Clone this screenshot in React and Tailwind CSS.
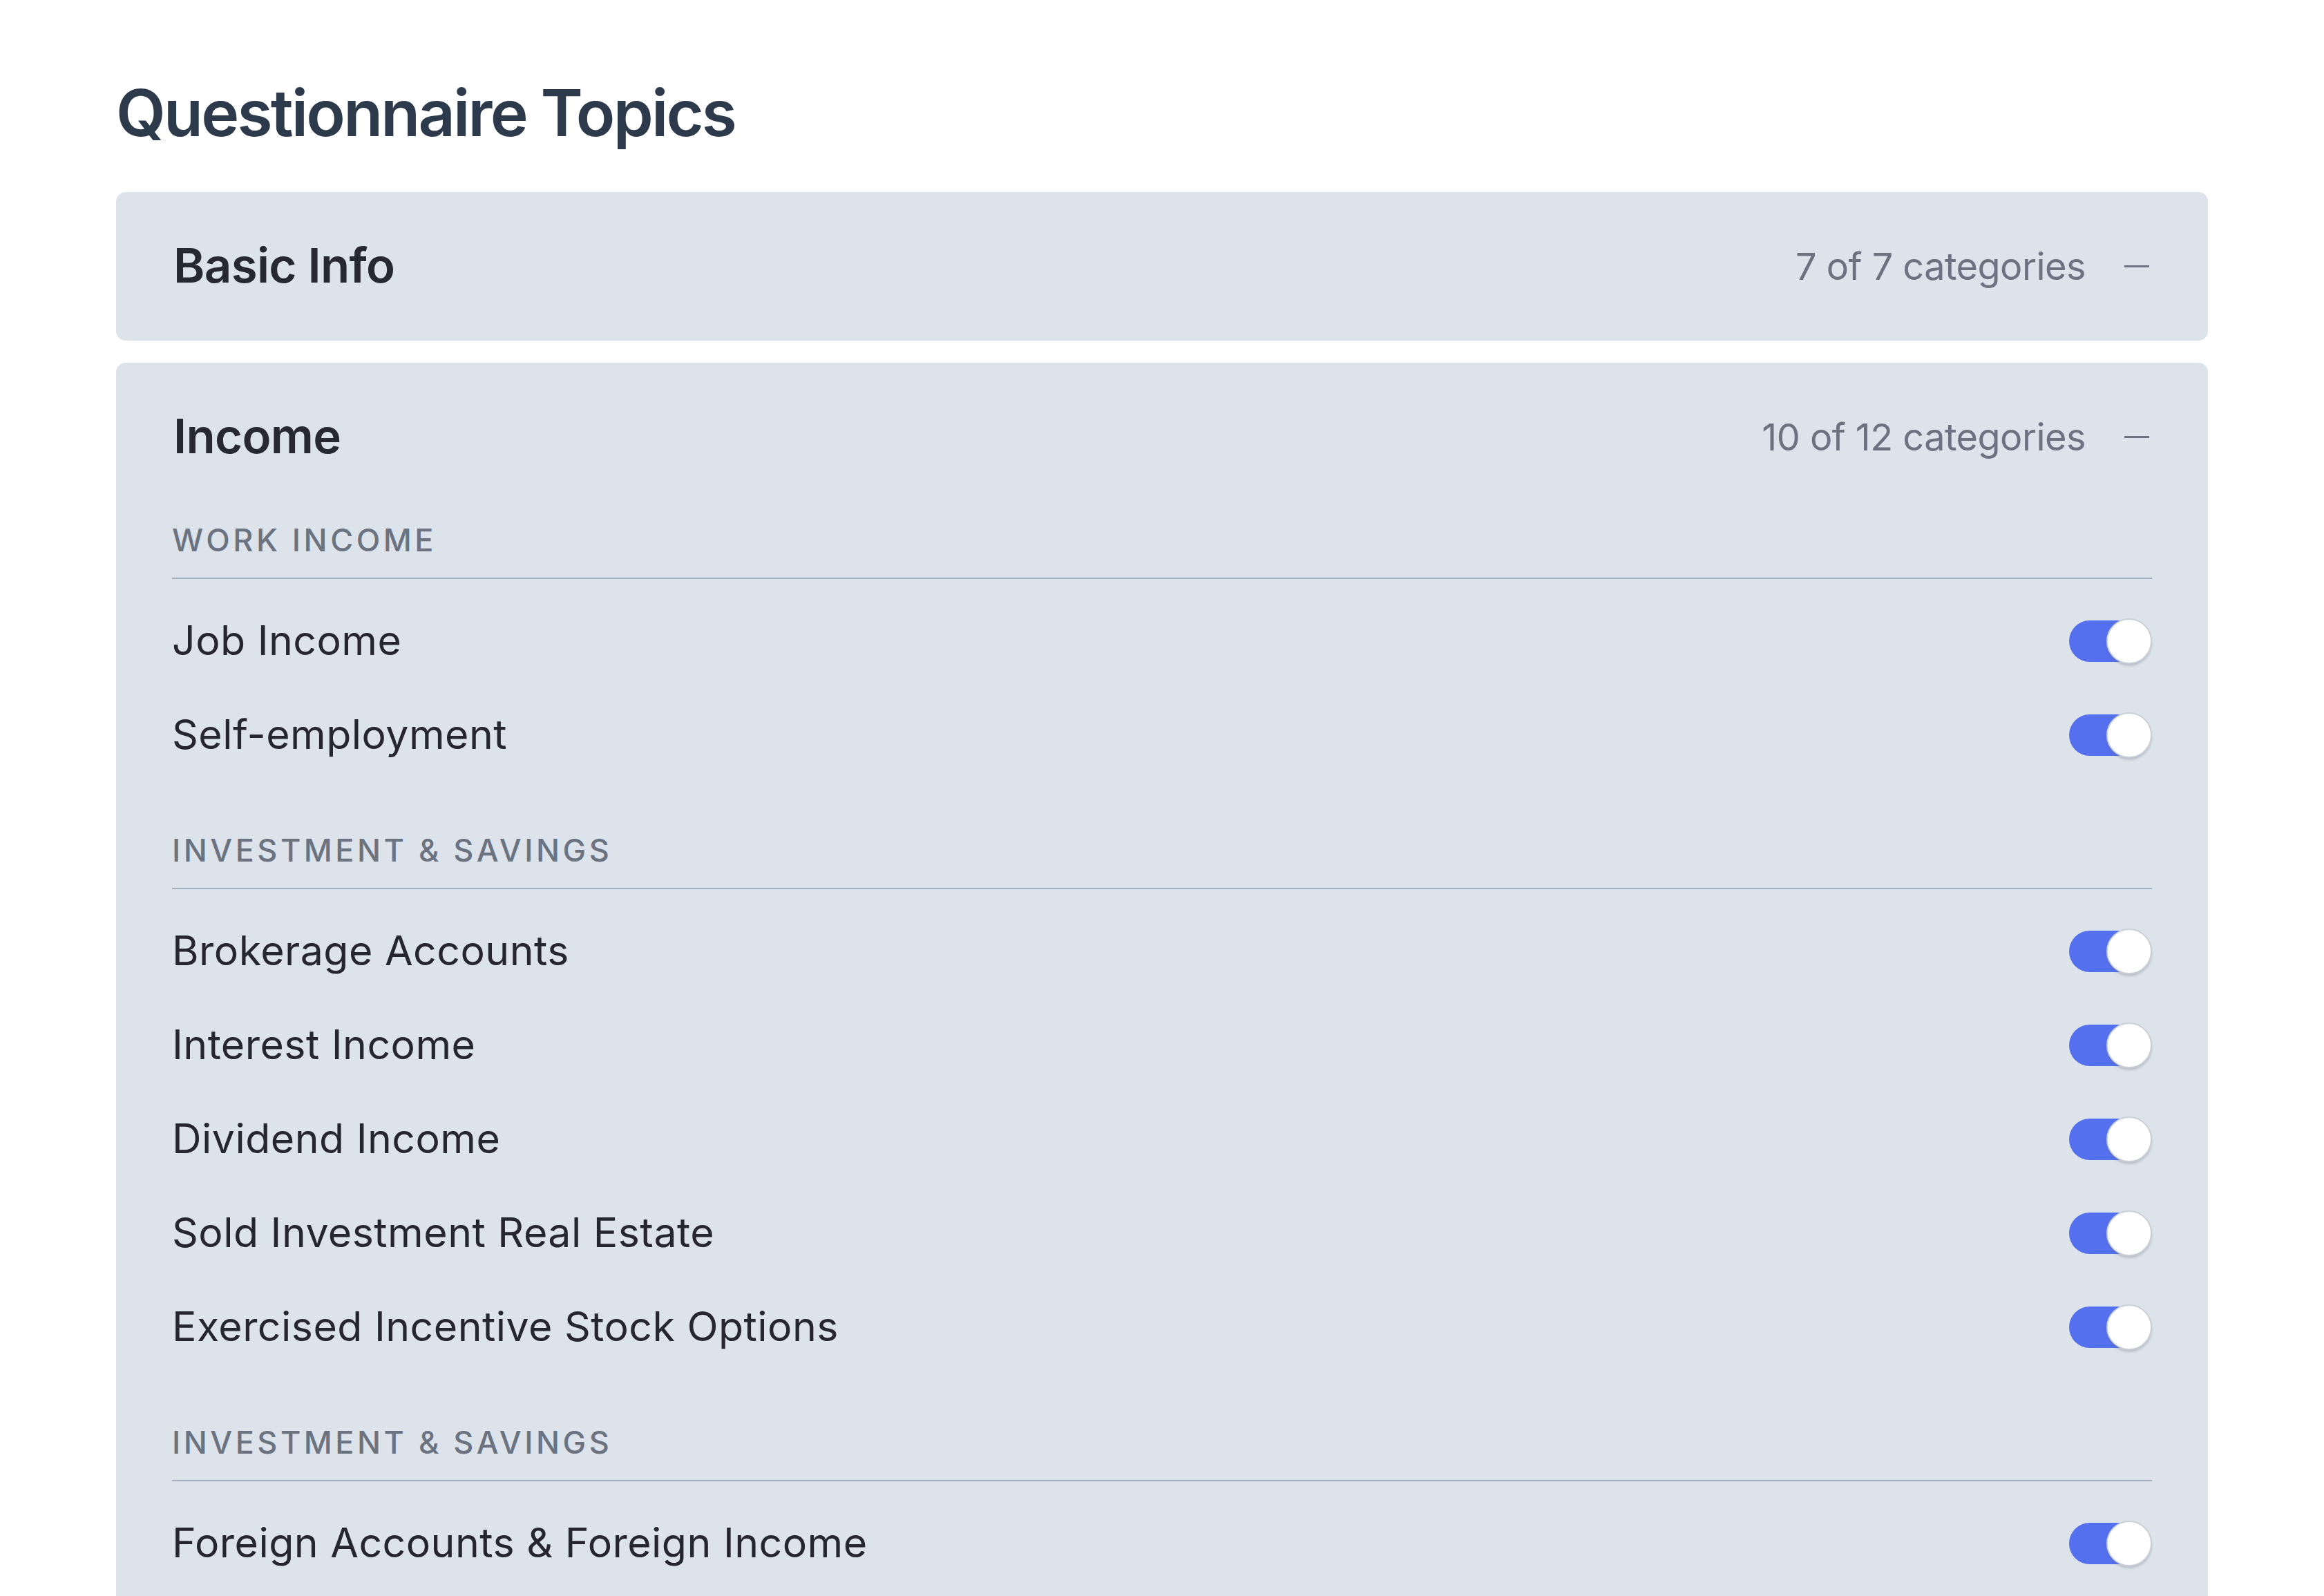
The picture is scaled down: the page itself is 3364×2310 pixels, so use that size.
import { useState } from 'react'

const INCOME_GROUPS = [
  {
    label: 'WORK INCOME',
    items: ['Job Income', 'Self-employment'],
  },
  {
    label: 'INVESTMENT & SAVINGS',
    items: [
      'Brokerage Accounts',
      'Interest Income',
      'Dividend Income',
      'Sold Investment Real Estate',
      'Exercised Incentive Stock Options',
    ],
  },
  {
    label: 'INVESTMENT & SAVINGS',
    items: ['Foreign Accounts & Foreign Income'],
  },
]

function Toggle({ on, onChange }) {
  return (
    <button
      type="button"
      onClick={onChange}
      className="relative flex h-[66px] w-[120px] shrink-0 items-center"
    >
      <span
        className={`h-[60px] w-[116px] rounded-full ${on ? 'bg-[#5570ef]' : 'bg-[#b8c2cf]'}`}
      />
      <span
        className={`absolute top-0 h-[66px] w-[66px] rounded-full border-2 border-[#c9d0d8] bg-white shadow-[0_3px_3px_rgba(90,100,120,0.25)] ${on ? 'right-0' : 'left-0'}`}
      />
    </button>
  )
}

function Minus() {
  return <span className="mr-[5px] block h-[3px] w-[36px] bg-[#6b7280]" />
}

function PanelHeader({ title, count }) {
  return (
    <div className="flex h-[215px] items-center justify-between pl-[83px] pr-[80px]">
      <span className="text-[69px] font-semibold tracking-[-0.01em] text-[#262833]">{title}</span>
      <div className="flex items-center gap-[56px]">
        <span className="text-[54px] tracking-[-0.01em] text-[#6b7280]">{count}</span>
        <Minus />
      </div>
    </div>
  )
}

function Group({ label, items, state, toggle, first }) {
  return (
    <div className={first ? 'mt-[14px]' : 'mt-[71px]'}>
      <div className="border-b-2 border-[#a3b0bf] pb-[26px] text-[45px] leading-[56px] font-medium tracking-[0.1em] text-[#6b7280]">
        {label}
      </div>
      <div className="mt-[22px]">
        {items.map((name) => (
          <div key={name} className="flex h-[136px] items-center justify-between">
            <span className="text-[59px] tracking-[0.008em] text-[#25262f]">{name}</span>
            <Toggle on={state[name] !== false} onChange={() => toggle(name)} />
          </div>
        ))}
      </div>
    </div>
  )
}

export default function App() {
  const [state, setState] = useState({})
  const toggle = (name) => setState((s) => ({ ...s, [name]: s[name] === false }))

  return (
    <div className="h-[2310px] overflow-hidden bg-white px-[168px] pt-[94px] font-['Inter','Liberation_Sans',sans-serif]">
      <h1 className="mb-[44px] text-[93px] font-semibold tracking-[-0.03em] text-[#2d3a4b]">
        Questionnaire Topics
      </h1>

      <div className="flex flex-col gap-[32px]">
        <section className="rounded-[14px] bg-[#dce3eb]">
          <PanelHeader title="Basic Info" count="7 of 7 categories" />
        </section>

        <section className="rounded-[14px] bg-[#dce3eb] pb-[80px]">
          <PanelHeader title="Income" count="10 of 12 categories" />
          <div className="px-[81px]">
            {INCOME_GROUPS.map((g, i) => (
              <Group key={i} {...g} first={i === 0} state={state} toggle={toggle} />
            ))}
          </div>
        </section>
      </div>
    </div>
  )
}
